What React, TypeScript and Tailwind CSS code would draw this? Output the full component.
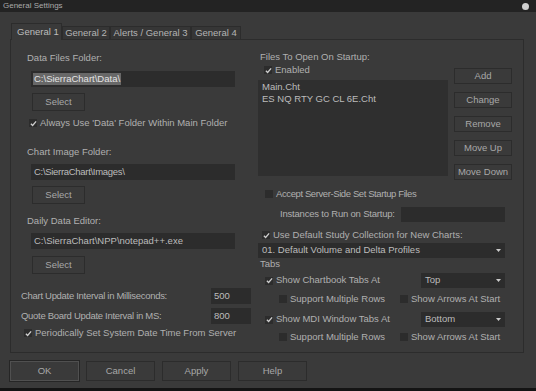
import React from "react";

const font = { fontFamily: '"Liberation Sans", Arial, sans-serif' };

const Check = ({ on }: { on?: boolean }) => (
  <span className="w-[8px] h-[8px] bg-[#2c2c2c] flex items-center justify-center shrink-0">
    {on && (
      <svg width="7" height="7" viewBox="0 0 8 8">
        <path d="M1 4.2 L3 6.2 L7 1.5" stroke="#cfcfcf" strokeWidth="1.5" fill="none" />
      </svg>
    )}
  </span>
);

const CheckRow = ({
  on,
  label,
  className = "",
  labelClass = "",
}: {
  on?: boolean;
  label: string;
  className?: string;
  labelClass?: string;
}) => (
  <div className={`flex items-center gap-[3px] h-[12px] ${className}`}>
    <Check on={on} />
    <span className={`whitespace-nowrap ${labelClass}`}>{label}</span>
  </div>
);

const Btn = ({ label, className = "" }: { label: string; className?: string }) => (
  <div className={`flex items-center justify-center border border-[#2c2c2c] bg-[#3a3a3a] text-[#a8a8a8] ${className}`}>
    {label}
  </div>
);

const Field = ({ value, className = "" }: { value: string; className?: string }) => (
  <div className={`h-[16px] bg-[#2c2c2c] flex items-center pl-[3px] text-[#bcbcbc] whitespace-nowrap ${className}`}>
    {value}
  </div>
);

const Select = ({ value, className = "" }: { value: string; className?: string }) => (
  <div className={`h-[15px] bg-[#2c2c2c] flex items-center justify-between pl-[4px] pr-[4px] text-[#bcbcbc] whitespace-nowrap ${className}`}>
    <span>{value}</span>
    <svg width="5" height="3" viewBox="0 0 5 3">
      <path d="M0 0 L5 0 L2.5 3 Z" fill="#cccccc" />
    </svg>
  </div>
);

const tabs = [
  { t: "General 2", w: "w-[48px]" },
  { t: "Alerts / General 3", w: "w-[81px]" },
  { t: "General 4", w: "w-[50px]" },
];

export default function App() {
  return (
    <div className="w-[536px] h-[391px] bg-[#3a3a3a] flex flex-col overflow-hidden text-[9.5px] text-[#b0b0b0]" style={font}>
      <div className="h-[12px] bg-[#232323] flex items-center justify-between pl-[3px] pr-[7px]">
        <span className="text-[8px] text-[#aaaaaa]">General Settings</span>
        <span className="w-[7px] h-[7px] rounded-full bg-[#d0d0d0]" />
      </div>

      <div className="pl-[10px] pr-[12px]">
        <div className="mt-[11px] h-[16px] flex items-end pl-[1px]">
          <div className="h-[17px] -mb-px w-[51px] border border-b-0 border-[#2c2c2c] bg-[#3a3a3a] flex items-center pl-[5px] text-[#bdbdbd] relative z-10">
            General 1
          </div>
          {tabs.map(({ t, w }) => (
            <div key={t} className={`h-[13px] ${w} border border-b-0 border-[#2c2c2c] bg-[#363636] flex items-center justify-center text-[#b4b4b4] whitespace-nowrap`}>
              {t}
            </div>
          ))}
        </div>

        <div className="h-[314px] border border-[#2c2c2c] flex">
          <div className="w-[247px] pl-[16px] pt-[12px] flex flex-col items-start">
            <div className="h-[12px] leading-[12px]">Data Files Folder:</div>
            <div className="mt-[7px] ml-[4px] w-[204px] h-[16px] bg-[#2c2c2c] flex items-center pl-[2px]">
              <span className="bg-[#686868] text-[#e4e4e4] px-[1px] leading-[12px]">C:\SierraChart\Data\</span>
            </div>
            <Btn label="Select" className="mt-[6px] ml-[5px] w-[53px] h-[18px]" />
            <CheckRow on label="Always Use 'Data' Folder Within Main Folder" className="mt-[6px] ml-[2px]" />

            <div className="mt-[17px] h-[12px] leading-[12px]">Chart Image Folder:</div>
            <Field value="C:\SierraChart\Images\" className="mt-[6px] ml-[4px] w-[204px] tracking-[-0.3px]" />
            <Btn label="Select" className="mt-[6px] ml-[5px] w-[53px] h-[18px]" />

            <div className="mt-[11px] h-[12px] leading-[12px]">Daily Data Editor:</div>
            <Field value="C:\SierraChart\NPP\notepad++.exe" className="mt-[6px] ml-[4px] w-[204px]" />
            <Btn label="Select" className="mt-[7px] ml-[5px] w-[53px] h-[18px]" />

            <div className="mt-[14px] -ml-[6px] flex items-center h-[16px]">
              <span className="w-[190px] whitespace-nowrap tracking-[-0.3px]">Chart Update Interval in Milliseconds:</span>
              <Field value="500" className="w-[40px]" />
            </div>
            <div className="mt-[4px] -ml-[6px] flex items-center h-[16px]">
              <span className="w-[190px] whitespace-nowrap tracking-[-0.3px]">Quote Board Update Interval in MS:</span>
              <Field value="800" className="w-[40px]" />
            </div>
            <CheckRow on label="Periodically Set System Date Time From Server" className="mt-[3px] -ml-[3px]" />
          </div>

          <div className="flex-1 flex flex-col items-start">
            <div className="flex">
              <div className="w-[190px] pt-[11px] flex flex-col items-start">
                <div className="ml-[2px] h-[12px] leading-[12px]">Files To Open On Startup:</div>
                <CheckRow on label="Enabled" className="mt-[1px] ml-[6px]" />
                <div className="mt-[4px] w-[190px] h-[96px] bg-[#2f2f2f] pl-[4px] pt-[1px] leading-[12px] text-[#bcbcbc]">
                  <div>Main.Cht</div>
                  <div>ES NQ RTY GC CL 6E.Cht</div>
                </div>
              </div>
              <div className="ml-[6px] pt-[28px] flex flex-col gap-[8px]">
                {["Add", "Change", "Remove", "Move Up", "Move Down"].map((b) => (
                  <Btn key={b} label={b} className="w-[58px] h-[16px]" />
                ))}
              </div>
            </div>

            <CheckRow label="Accept Server-Side Set Startup Files" className="mt-[8px] ml-[7px]" labelClass="tracking-[-0.4px]" />
            <div className="mt-[7px] flex items-center h-[15px] pl-[22px]">
              <span className="w-[121px] whitespace-nowrap tracking-[-0.2px]">Instances to Run on Startup:</span>
              <div className="w-[104px] h-[15px] bg-[#2c2c2c]" />
            </div>
            <CheckRow on label="Use Default Study Collection for New Charts:" className="mt-[7px] ml-[4px]" />
            <Select value="01. Default Volume and Delta Profiles" className="mt-[2px] w-[247px]" />
            <div className="ml-[2px] h-[12px] leading-[12px]">Tabs</div>

            <div className="mt-[3px] flex items-center h-[15px] pl-[7px]">
              <CheckRow on label="Show Chartbook Tabs At" className="w-[156px]" />
              <Select value="Top" className="w-[84px]" />
            </div>
            <div className="mt-[5px] flex items-center pl-[21px]">
              <CheckRow label="Support Multiple Rows" className="w-[121px]" />
              <CheckRow label="Show Arrows At Start" />
            </div>
            <div className="mt-[7px] flex items-center h-[15px] pl-[7px]">
              <CheckRow on label="Show MDI Window Tabs At" className="w-[156px]" />
              <Select value="Bottom" className="w-[84px]" />
            </div>
            <div className="mt-[4px] flex items-center pl-[21px]">
              <CheckRow label="Support Multiple Rows" className="w-[121px]" />
              <CheckRow label="Show Arrows At Start" />
            </div>
          </div>
        </div>

        <div className="mt-[8px] flex gap-[7px]">
          <Btn label="OK" className="w-[69px] h-[20px] !border-[#505050] outline outline-1 outline-[#262626]" />
          <Btn label="Cancel" className="w-[69px] h-[20px]" />
          <Btn label="Apply" className="w-[69px] h-[20px]" />
          <Btn label="Help" className="w-[69px] h-[20px]" />
        </div>
      </div>

      <div className="flex-1" />
      <div className="h-[3px] bg-[#141414]" />
    </div>
  );
}
